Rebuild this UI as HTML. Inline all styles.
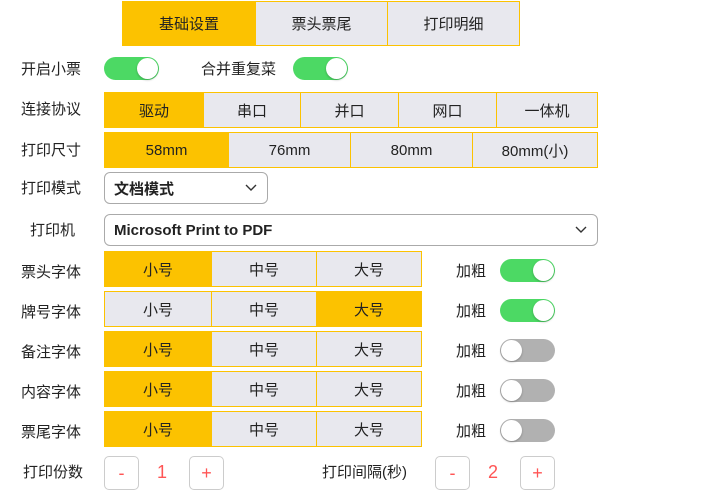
<!DOCTYPE html><html><head><meta charset="utf-8"><style>
*{box-sizing:border-box;margin:0;padding:0}
body{width:701px;height:499px;background:#fff;position:relative;font-family:"Liberation Sans","Noto Sans CJK SC",sans-serif;font-size:15px;color:#222;overflow:hidden}
.a{position:absolute}
.c{position:absolute;border:1px solid #fcc200;background:#e8e8ee;display:flex;align-items:center;justify-content:center;font-size:15px;color:#222}
.c.y{background:#fcc200}
.l{position:absolute;font-size:15px;line-height:20px}
.t{position:absolute;width:55px;height:23px;border-radius:12px;background:#4cd964}
.t::after{content:"";position:absolute;right:1px;top:1px;width:21px;height:21px;border-radius:50%;background:#fff;box-shadow:0 1px 2px rgba(0,0,0,.25)}
.t.o{background:#b1b1b1}.t.o::after{right:auto;left:1px}
.s{position:absolute;border:1px solid #aaa;border-radius:6px;background:#fff;font-weight:bold;font-size:15px;display:flex;align-items:center;padding-left:9px}
.s svg{position:absolute;right:10px;top:11px}
.b{position:absolute;width:35px;height:34px;border:1px solid #ccc;border-radius:5px;color:#f55;display:flex;align-items:center;justify-content:center;font-size:18px}
.n{position:absolute;color:#f55;font-size:18px}
</style></head><body>
<div class="c y" style="left:122px;top:1px;width:134px;height:45px">基础设置</div>
<div class="c" style="left:255px;top:1px;width:133px;height:45px">票头票尾</div>
<div class="c" style="left:387px;top:1px;width:133px;height:45px">打印明细</div>

<div class="l" style="left:21px;top:60px">开启小票</div><div class="t" style="left:104px;top:57px"></div>
<div class="l" style="left:201px;top:60px">合并重复菜</div><div class="t" style="left:293px;top:57px"></div>

<div class="l" style="left:21px;top:100px">连接协议</div>
<div class="c y" style="left:104px;top:92px;width:100px;height:36px">驱动</div>
<div class="c" style="left:203px;top:92px;width:98px;height:36px">串口</div>
<div class="c" style="left:300px;top:92px;width:99px;height:36px">并口</div>
<div class="c" style="left:398px;top:92px;width:99px;height:36px">网口</div>
<div class="c" style="left:496px;top:92px;width:102px;height:36px">一体机</div>

<div class="l" style="left:21px;top:141px">打印尺寸</div>
<div class="c y" style="left:104px;top:132px;width:125px;height:36px">58mm</div>
<div class="c" style="left:228px;top:132px;width:123px;height:36px">76mm</div>
<div class="c" style="left:350px;top:132px;width:123px;height:36px">80mm</div>
<div class="c" style="left:472px;top:132px;width:126px;height:36px">80mm(小)</div>

<div class="l" style="left:21px;top:179px">打印模式</div>
<div class="s" style="left:104px;top:172px;width:164px;height:32px">文档模式<svg width="12" height="8"><path d="M1 1l5 5 5-5" fill="none" stroke="#333" stroke-width="1.4"/></svg></div>
<div class="l" style="left:30px;top:221px">打印机</div>
<div class="s" style="left:104px;top:214px;width:494px;height:32px">Microsoft Print to PDF<svg width="12" height="8"><path d="M1 1l5 5 5-5" fill="none" stroke="#333" stroke-width="1.4"/></svg></div>

<div class="l" style="left:21px;top:263px">票头字体</div>
<div class="c y" style="left:104px;top:251px;width:108px;height:36px">小号</div><div class="c" style="left:211px;top:251px;width:106px;height:36px">中号</div><div class="c" style="left:316px;top:251px;width:106px;height:36px">大号</div>
<div class="l" style="left:456px;top:262px">加粗</div><div class="t" style="left:500px;top:259px"></div>

<div class="l" style="left:21px;top:303px">牌号字体</div>
<div class="c" style="left:104px;top:291px;width:108px;height:36px">小号</div><div class="c" style="left:211px;top:291px;width:106px;height:36px">中号</div><div class="c y" style="left:316px;top:291px;width:106px;height:36px">大号</div>
<div class="l" style="left:456px;top:302px">加粗</div><div class="t" style="left:500px;top:299px"></div>

<div class="l" style="left:21px;top:343px">备注字体</div>
<div class="c y" style="left:104px;top:331px;width:108px;height:36px">小号</div><div class="c" style="left:211px;top:331px;width:106px;height:36px">中号</div><div class="c" style="left:316px;top:331px;width:106px;height:36px">大号</div>
<div class="l" style="left:456px;top:342px">加粗</div><div class="t o" style="left:500px;top:339px"></div>

<div class="l" style="left:21px;top:383px">内容字体</div>
<div class="c y" style="left:104px;top:371px;width:108px;height:36px">小号</div><div class="c" style="left:211px;top:371px;width:106px;height:36px">中号</div><div class="c" style="left:316px;top:371px;width:106px;height:36px">大号</div>
<div class="l" style="left:456px;top:382px">加粗</div><div class="t o" style="left:500px;top:379px"></div>

<div class="l" style="left:21px;top:423px">票尾字体</div>
<div class="c y" style="left:104px;top:411px;width:108px;height:36px">小号</div><div class="c" style="left:211px;top:411px;width:106px;height:36px">中号</div><div class="c" style="left:316px;top:411px;width:106px;height:36px">大号</div>
<div class="l" style="left:456px;top:422px">加粗</div><div class="t o" style="left:500px;top:419px"></div>

<div class="l" style="left:23px;top:463px">打印份数</div>
<div class="b" style="left:104px;top:456px">-</div><div class="n" style="left:157px;top:462px">1</div><div class="b" style="left:189px;top:456px">+</div>
<div class="l" style="left:322px;top:463px">打印间隔(秒)</div>
<div class="b" style="left:435px;top:456px">-</div><div class="n" style="left:488px;top:462px">2</div><div class="b" style="left:520px;top:456px">+</div>
</body></html>
